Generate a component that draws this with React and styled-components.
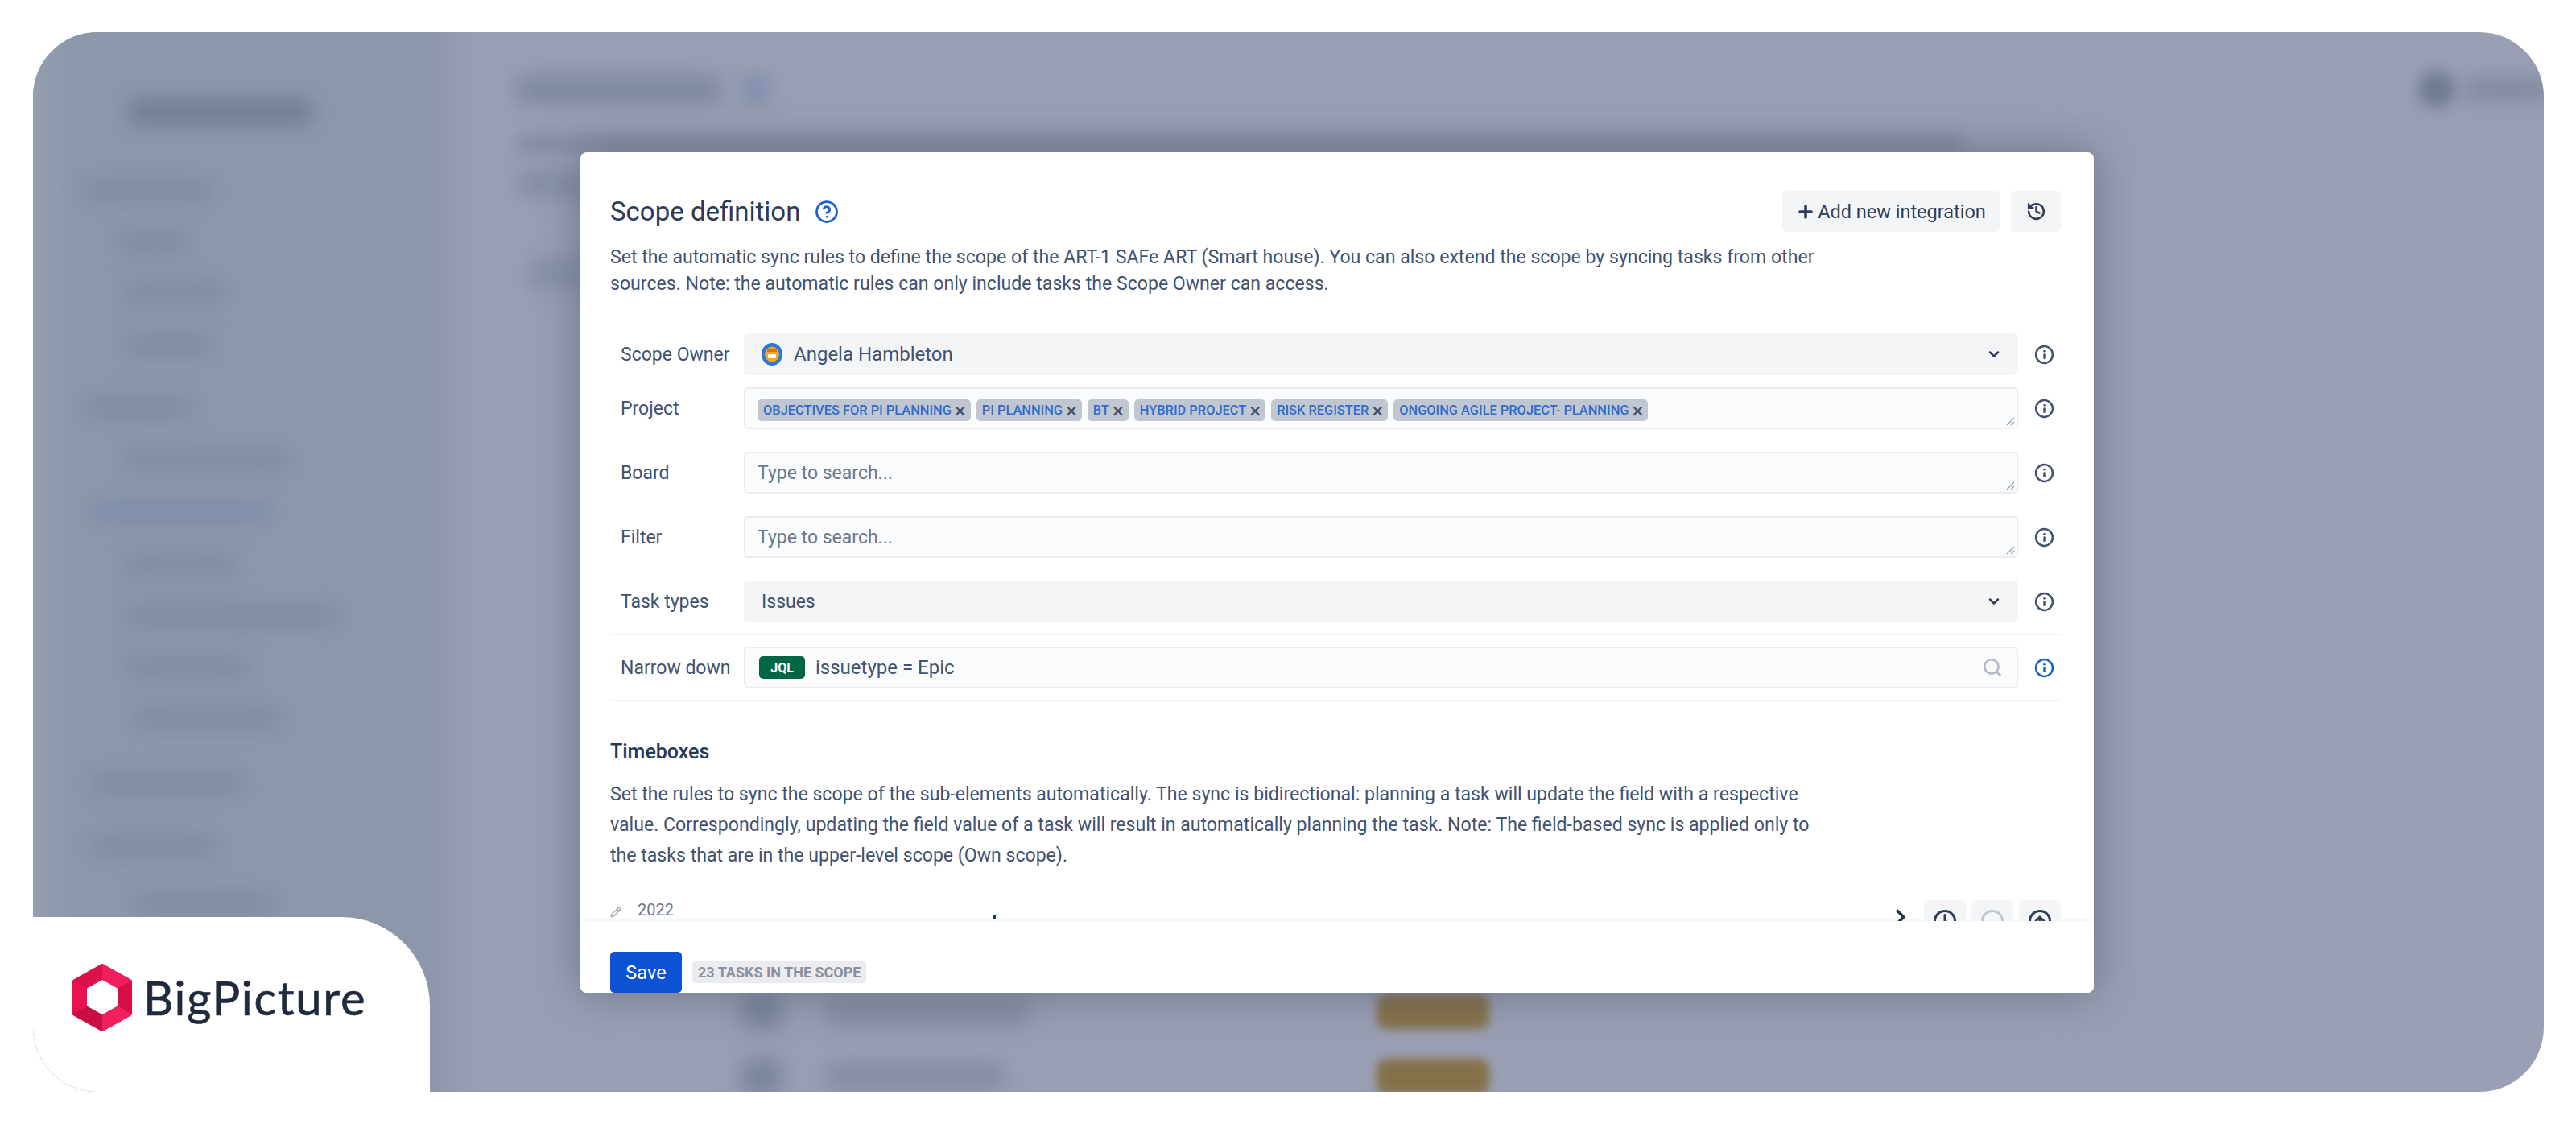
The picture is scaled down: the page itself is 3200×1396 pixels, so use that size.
import React from 'react';
import styled, { createGlobalStyle } from 'styled-components';
import { ChevronDown, ChevronRight, Circle, CircleArrowUp, CircleHelp, Clock, History, Info, Pencil, Plus, Search } from 'lucide-react';

const GlobalStyle = createGlobalStyle`
  html, body { margin: 0; padding: 0; background: #fff; }
  body { font-family: Roboto, "Liberation Sans", sans-serif; color: #42526e; }
`;

const sideItems = [
  { w: 165, ml: 61, mt: 70 },
  { w: 90, ml: 105, mt: 37 },
  { w: 125, ml: 114, mt: 37 },
  { w: 110, ml: 114, mt: 39 },
  { w: 135, ml: 64, mt: 52 },
  { w: 205, ml: 114, mt: 39 },
  { w: 230, ml: 69, mt: 39, blue: true },
  { w: 140, ml: 114, mt: 40 },
  { w: 265, ml: 114, mt: 37 },
  { w: 155, ml: 114, mt: 37 },
  { w: 185, ml: 124, mt: 38 },
  { w: 195, ml: 69, mt: 55 },
  { w: 160, ml: 69, mt: 52 },
  { w: 175, ml: 124, mt: 45 },
];

const tags = ['Objectives for PI Planning', 'PI Planning', 'BT', 'Hybrid Project', 'Risk Register', 'Ongoing Agile Project- Planning'];

const Page = styled.div`
  width: 3200px;
  height: 1396px;
  padding: 40px 40px 40px 41px;
  box-sizing: border-box;
  overflow: hidden;
`;
const Frame = styled.div`
  position: relative;
  display: flex;
  height: 100%;
  border-radius: 80px;
  overflow: hidden;
  background: #9a9fb3;
`;
const Sidebar = styled.aside`
  width: 550px;
  flex-shrink: 0;
  padding-top: 84px;
  box-sizing: border-box;
  background: linear-gradient(90deg, #959eb0 0, #8e97aa 50px, #8e97aa 90%, #9a9fb3 100%);
`;
const Main = styled.main`
  flex: 1;
  padding: 48px 0 0 50px;
  display: flex;
  flex-direction: column;
`;
const Blob = styled.div`
  width: ${p => p.$w}px;
  height: ${p => p.$h || 26}px;
  margin-left: ${p => p.$ml || 0}px;
  margin-top: ${p => p.$mt || 0}px;
  border-radius: ${p => p.$round ? '50%' : '12px'};
  background: ${p => p.$color || '#7d879b'};
  filter: blur(${p => p.$blur || 13}px);
  flex-shrink: 0;
`;
const MainTop = styled.div`
  display: flex;
  align-items: center;
`;
const MainTopRight = styled.div`
  display: flex;
  align-items: center;
  gap: 10px;
  margin-left: auto;
  margin-right: -10px;
`;
const ListRow = styled.div`
  display: flex;
  align-items: center;
  height: 44px;
  margin-top: ${p => p.$mt}px;
  margin-left: 280px;
`;
const Modal = styled.section`
  position: absolute;
  left: 680px;
  top: 149px;
  width: 1880px;
  height: 1044px;
  display: flex;
  flex-direction: column;
  background: #fff;
  border-radius: 8px;
  box-shadow: 0 0 55px rgba(70, 78, 100, 0.55);
  overflow: hidden;
`;
const ModalBody = styled.div`
  height: 955px;
  flex-shrink: 0;
  padding: 48px 41px 0 37px;
  box-sizing: border-box;
  overflow: hidden;
`;
const Header = styled.header`
  display: flex;
  align-items: center;
  justify-content: space-between;
  height: 51px;
`;
const TitleWrap = styled.div`
  display: flex;
  align-items: center;
  gap: 18px;
  color: #1d5fd0;
`;
const Title = styled.h2`
  margin: 0;
  font-size: 33px;
  font-weight: 400;
  color: #2c3a56;
`;
const HeaderActions = styled.div`
  display: flex;
  gap: 14px;
`;
const GhostButton = styled.button`
  display: flex;
  align-items: center;
  justify-content: center;
  gap: 3px;
  height: 51px;
  width: ${p => p.$w}px;
  padding: 0;
  border: 0;
  border-radius: 5px;
  background: #f4f5f7;
  color: #2f3d5a;
  font: 400 23.5px Roboto, sans-serif;
`;
const Description = styled.p`
  margin: 15px 0 0;
  width: 1520px;
  font-size: 23.1px;
  line-height: 33px;
  color: #42526e;
`;
const Form = styled.div`
  margin-top: 45px;
`;
const Row = styled.div`
  display: grid;
  grid-template-columns: 166px 1583px 1fr;
  align-items: center;
  margin-top: ${p => p.$mt || 0}px;
  padding: ${p => p.$divided ? '0 0 14px' : '0'};
  border-bottom: ${p => p.$divided ? '2px solid #f1f2f4' : '0'};
`;
const Label = styled.label`
  padding-left: 13px;
  font-size: 23px;
  color: #42526e;
`;
const Field = styled.div`
  position: relative;
  display: flex;
  align-items: center;
  height: 52px;
  box-sizing: border-box;
  padding: 0 ${p => p.$select ? '22px' : '15px'};
  border-radius: 5px;
  border: ${p => p.$select ? '0' : '2px solid #ebecf0'};
  background: ${p => p.$select ? '#f4f5f7' : '#fafbfc'};
  font-size: 23px;
  color: ${p => p.$placeholder ? '#6b778c' : '#42526e'};
`;
const Grip = styled.svg`
  position: absolute;
  right: 2px;
  bottom: 2px;
`;
const TagList = styled.div`
  display: flex;
  gap: 7px;
  margin-top: 5px;
`;
const Tag = styled.span`
  display: flex;
  align-items: center;
  gap: 4px;
  height: 27px;
  padding: 0 6px 0 7px;
  border-radius: 5px;
  background: #c1c7d0;
  color: #2f6ccf;
  font-size: 16.4px;
  font-weight: 500;
  text-transform: uppercase;
  white-space: nowrap;
`;
const TagClose = styled.span`
  color: #42526e;
  font-size: 26px;
  font-weight: 400;
  line-height: 24px;
`;
const OwnerName = styled.span`
  margin-left: 14px;
  font-size: 24px;
`;
const TrailingIcon = styled.span`
  display: flex;
  margin-left: auto;
  margin-right: ${p => p.$mr || 0}px;
  color: ${p => p.$color || '#2f3d5a'};
`;
const JqlBadge = styled.span`
  display: flex;
  align-items: center;
  justify-content: center;
  width: 57px;
  height: 28px;
  margin-left: 2px;
  border-radius: 5px;
  background: #006644;
  color: #fff;
  font-size: 16px;
  font-weight: 700;
`;
const JqlText = styled.span`
  margin-left: 13px;
  font-size: 24px;
`;
const InfoCell = styled.div`
  display: flex;
  padding-left: 20px;
  color: ${p => p.$blue ? '#1d5fd0' : '#42526e'};
`;
const Timeboxes = styled.div`
  margin-top: 48px;
`;
const SectionTitle = styled.h3`
  margin: 0;
  font-size: 25px;
  line-height: 30px;
  font-weight: 500;
  color: #253858;
`;
const Paragraph = styled.p`
  margin: 19px 0 0;
  width: 1500px;
  font-size: 23.1px;
  line-height: 38px;
  color: #42526e;
`;
const YearRow = styled.div`
  position: relative;
  display: flex;
  align-items: flex-start;
  margin-top: 36px;
  height: 52px;
`;
const Year = styled.span`
  margin: 3px 0 0 20px;
  font-size: 20px;
  line-height: 18px;
  color: #6b778c;
`;
const PencilMark = styled.span`
  display: flex;
  margin: 8px 0 0 0;
  color: #97a0af;
`;
const Tick = styled.span`
  position: absolute;
  left: 476px;
  top: 19px;
  width: 3px;
  height: 4px;
  background: #253858;
`;
const YearActions = styled.div`
  display: flex;
  align-items: flex-start;
  gap: 7px;
  margin-left: auto;
`;
const SquareButton = styled.span`
  display: flex;
  align-items: center;
  justify-content: center;
  width: 52px;
  height: 52px;
  border-radius: 5px;
  background: #f4f5f7;
  color: ${p => p.$faint ? '#c1c7d0' : '#2f3d5a'};
`;
const ExpandMark = styled.span`
  display: flex;
  margin: 6px 7px 0 0;
  color: #253858;
`;
const Footer = styled.footer`
  flex: 1;
  display: flex;
  align-items: center;
  gap: 13px;
  padding: 38px 0 0 37px;
  box-shadow: 0 -2px 0 #f7f8f9;
  background: #fff;
`;
const SaveButton = styled.button`
  width: 89px;
  height: 51px;
  border: 0;
  border-radius: 5px;
  background: #0c52d3;
  color: #fff;
  font: 400 23.5px Roboto, sans-serif;
`;
const CountBadge = styled.span`
  display: flex;
  align-items: center;
  height: 27px;
  padding: 0 7px;
  border-radius: 4px;
  background: #ebecf0;
  color: #8a909e;
  font-size: 18px;
  font-weight: 700;
  white-space: nowrap;
`;
const BrandCard = styled.div`
  position: absolute;
  left: 0;
  bottom: 0;
  width: 493px;
  height: 217px;
  display: flex;
  align-items: center;
  gap: 14px;
  padding: 0 0 18px 49px;
  box-sizing: border-box;
  background: #fff;
  border-radius: 0 110px 0 0;
`;
const BrandName = styled.span`
  font-family: Lato, "Open Sans", sans-serif;
  font-size: 58px;
  font-weight: 400;
  letter-spacing: 1.7px;
  color: #1f2a3d;
  -webkit-text-stroke: 0.6px #1f2a3d;
`;

const Logo = () => (
  <svg width="74" height="84" viewBox="0 0 74 84">
    <polygon points="37,3 71,22 71,62 37,81 3,62 3,22" fill="#e8124f" stroke="#e8124f" strokeWidth="6" strokeLinejoin="round" />
    <polygon points="37,0 74,21 55,31 37,21" fill="#f01e5c" />
    <polygon points="74,21 74,63 55,52 55,31" fill="#d70f49" />
    <polygon points="74,63 37,84 37,62 55,52" fill="#f0205c" />
    <polygon points="37,84 0,63 19,52 37,62" fill="#c90e44" />
    <polygon points="0,63 0,21 19,31 19,52" fill="#e8124f" />
    <polygon points="0,21 37,0 37,21 19,31" fill="#dd1049" />
    <polygon points="37,21 55,31 55,52 37,62 19,52 19,31" fill="#fff" stroke="#fff" strokeWidth="2" strokeLinejoin="round" />
  </svg>
);

const Avatar = () => (
  <svg width="26" height="28" viewBox="0 0 26 28">
    <ellipse cx="13" cy="14" rx="13" ry="14" fill="#2b78d8" />
    <ellipse cx="13" cy="14" rx="9" ry="9.5" fill="#f5a623" />
    <rect x="8" y="14" width="10" height="5" rx="1" fill="#fff" />
    <rect x="7" y="8" width="12" height="3" fill="#c77f12" />
  </svg>
);

const ResizeGrip = () => (
  <Grip width="11" height="11" viewBox="0 0 11 11">
    <path d="M1 10 L10 1 M6 10 L10 6" stroke="#97a0af" strokeWidth="1.3" />
  </Grip>
);

const InfoIcon = ({ blue }) => (
  <InfoCell $blue={blue}>
    <Info size={25} strokeWidth={2.4} />
  </InfoCell>
);

export default function App() {
  return (
    <Page>
      <GlobalStyle />
      <Frame>
        <Sidebar>
          <Blob $w={230} $ml={118} $h={30} $color="#6f7a90" />
          {sideItems.map((item, i) => (
            <Blob key={i} $w={item.w} $ml={item.ml} $mt={item.mt} $color={item.blue ? '#7b8cad' : '#808a9e'} />
          ))}
        </Sidebar>
        <Main>
          <MainTop>
            <Blob $w={255} $h={32} $color="#7c8699" />
            <Blob $w={36} $h={36} $ml={25} $round $color="#7b8cad" />
            <MainTopRight>
              <Blob $w={46} $h={46} $round $color="#6f7a90" $blur={9} />
              <Blob $w={110} $h={26} $color="#7f879b" />
            </MainTopRight>
          </MainTop>
          <Blob $w={1800} $h={22} $mt={33} $color="#838ca0" $blur={10} />
          <Blob $w={90} $h={28} $mt={25} $color="#838ca0" />
          <Blob $w={70} $h={36} $mt={80} $ml={15} $color="#858fa6" />
          <ListRow $mt={876}>
            <Blob $w={50} $h={44} $color="#78839a" />
            <Blob $w={255} $h={34} $ml={53} $color="#838ca0" />
            <Blob $w={140} $h={44} $ml={431} $color="#857149" $blur={6} />
          </ListRow>
          <ListRow $mt={37}>
            <Blob $w={50} $h={44} $color="#78839a" />
            <Blob $w={225} $h={34} $ml={53} $color="#838ca0" />
            <Blob $w={140} $h={44} $ml={461} $color="#857149" $blur={6} />
          </ListRow>
        </Main>
        <Modal>
          <ModalBody>
            <Header>
              <TitleWrap>
                <Title>Scope definition</Title>
                <CircleHelp size={30} strokeWidth={2.2} />
              </TitleWrap>
              <HeaderActions>
                <GhostButton $w={270}>
                  <Plus size={24} strokeWidth={3.6} />
                  Add new integration
                </GhostButton>
                <GhostButton $w={62}>
                  <History size={25} strokeWidth={2.4} />
                </GhostButton>
              </HeaderActions>
            </Header>
            <Description>
              Set the automatic sync rules to define the scope of the ART-1 SAFe ART (Smart house). You can also extend the scope by syncing tasks from other sources. Note: the automatic rules can only include tasks the Scope Owner can access.
            </Description>
            <Form>
              <Row>
                <Label>Scope Owner</Label>
                <Field $select>
                  <Avatar />
                  <OwnerName>Angela Hambleton</OwnerName>
                  <TrailingIcon $mr={-2}><ChevronDown size={20} strokeWidth={3} /></TrailingIcon>
                </Field>
                <InfoIcon />
              </Row>
              <Row $mt={15}>
                <Label>Project</Label>
                <Field>
                  <TagList>
                    {tags.map(tag => (
                      <Tag key={tag}>{tag}<TagClose>×</TagClose></Tag>
                    ))}
                  </TagList>
                  <ResizeGrip />
                </Field>
                <InfoIcon />
              </Row>
              <Row $mt={28}>
                <Label>Board</Label>
                <Field $placeholder>Type to search...<ResizeGrip /></Field>
                <InfoIcon />
              </Row>
              <Row $mt={28}>
                <Label>Filter</Label>
                <Field $placeholder>Type to search...<ResizeGrip /></Field>
                <InfoIcon />
              </Row>
              <Row $mt={28} $divided>
                <Label>Task types</Label>
                <Field $select>
                  Issues
                  <TrailingIcon $mr={-2}><ChevronDown size={20} strokeWidth={3} /></TrailingIcon>
                </Field>
                <InfoIcon />
              </Row>
              <Row $mt={14} $divided>
                <Label>Narrow down</Label>
                <Field>
                  <JqlBadge>JQL</JqlBadge>
                  <JqlText>issuetype = Epic</JqlText>
                  <TrailingIcon $mr={2} $color="#b3bac5"><Search size={26} strokeWidth={2.4} /></TrailingIcon>
                </Field>
                <InfoIcon blue />
              </Row>
            </Form>
            <Timeboxes>
              <SectionTitle>Timeboxes</SectionTitle>
              <Paragraph>
                Set the rules to sync the scope of the sub-elements automatically. The sync is bidirectional: planning a task will update the field with a respective value. Correspondingly, updating the field value of a task will result in automatically planning the task. Note: The field-based sync is applied only to the tasks that are in the upper-level scope (Own scope).
              </Paragraph>
              <YearRow>
                <PencilMark><Pencil size={14} /></PencilMark>
                <Year>2022</Year>
                <Tick />
                <YearActions>
                  <ExpandMark><ChevronRight size={30} strokeWidth={3} /></ExpandMark>
                  <SquareButton><Clock size={30} strokeWidth={2.4} /></SquareButton>
                  <SquareButton $faint><Circle size={30} strokeWidth={2.4} /></SquareButton>
                  <SquareButton><CircleArrowUp size={30} strokeWidth={2.4} /></SquareButton>
                </YearActions>
              </YearRow>
            </Timeboxes>
          </ModalBody>
          <Footer>
            <SaveButton>Save</SaveButton>
            <CountBadge>23 TASKS IN THE SCOPE</CountBadge>
          </Footer>
        </Modal>
        <BrandCard>
          <Logo />
          <BrandName>BigPicture</BrandName>
        </BrandCard>
      </Frame>
    </Page>
  );
}
